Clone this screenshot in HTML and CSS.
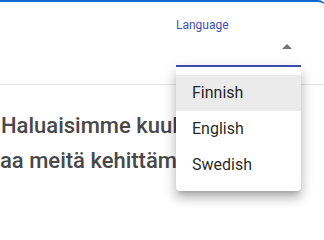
FILE: index.html
```html
<!DOCTYPE html>
<html lang="fi">
<head>
<meta charset="utf-8">
<title>Language</title>
<link rel="stylesheet" href="styles.css">
</head>
<body>
<div class="card">
  <header class="header">
    <div class="select-field">
      <div class="select-label">Language</div>
      <div class="select-input">
        <svg class="select-arrow" width="24" height="24" viewBox="0 0 24 24"><path d="M7 14l5-5 5 5z"/></svg>
      </div>
    </div>
  </header>
  <main class="content">
    <p class="intro">
      <span class="line line-1">Haluaisimme kuulla</span>
      <span class="line line-2">aa meitä kehittämään</span>
    </p>
  </main>
</div>
<ul class="menu">
  <li class="menu-item selected">Finnish</li>
  <li class="menu-item">English</li>
  <li class="menu-item">Swedish</li>
</ul>
</body>
</html>
```
FILE: styles.css
```css
html, body {
  margin: 0;
  padding: 0;
  background: #ffffff;
  overflow: hidden;
  height: 203px;
}
body {
  font-family: Roboto, "Noto Sans", Arial, sans-serif;
  color: rgba(0, 0, 0, 0.87);
}
.card {
  border-top: 2px solid #0b6bd0;
  border-top-right-radius: 8px;
  margin-right: -2px;
  background: #ffffff;
}
.header {
  height: 82px;
  border-bottom: 1px solid #e4e4e4;
  display: flex;
  justify-content: flex-end;
  padding-right: 25px;
}
.select-field {
  width: 125px;
  padding-top: 17px;
  display: flex;
  flex-direction: column;
}
.select-label {
  font-size: 12px;
  line-height: 12px;
  color: #3f51b5;
}
.select-input {
  height: 34px;
  border-bottom: 2px solid #3f51b5;
  display: flex;
  justify-content: flex-end;
  align-items: center;
}
.select-arrow {
  fill: #757575;
  margin-right: 2px;
  margin-top: -2px;
}
.content {
  padding-top: 23px;
}
.intro {
  margin: 0;
  font-size: 22px;
  line-height: 35px;
  font-weight: 500;
  color: #484848;
}
.line {
  display: block;
  white-space: nowrap;
}
.line-1 {
  padding-left: 1px;
}
.menu {
  position: absolute;
  top: 67px;
  left: 176px;
  width: 125px;
  margin: 0;
  padding: 8px 0;
  list-style: none;
  background: #ffffff;
  border-radius: 4px;
  box-shadow: 0 5px 5px -3px rgba(0,0,0,0.2), 0 8px 10px 1px rgba(0,0,0,0.14), 0 3px 14px 2px rgba(0,0,0,0.12);
}
.menu-item {
  height: 36px;
  line-height: 36px;
  padding-left: 16px;
  font-size: 16px;
  color: rgba(0, 0, 0, 0.87);
}
.menu-item.selected {
  background: #ebebeb;
}
```
